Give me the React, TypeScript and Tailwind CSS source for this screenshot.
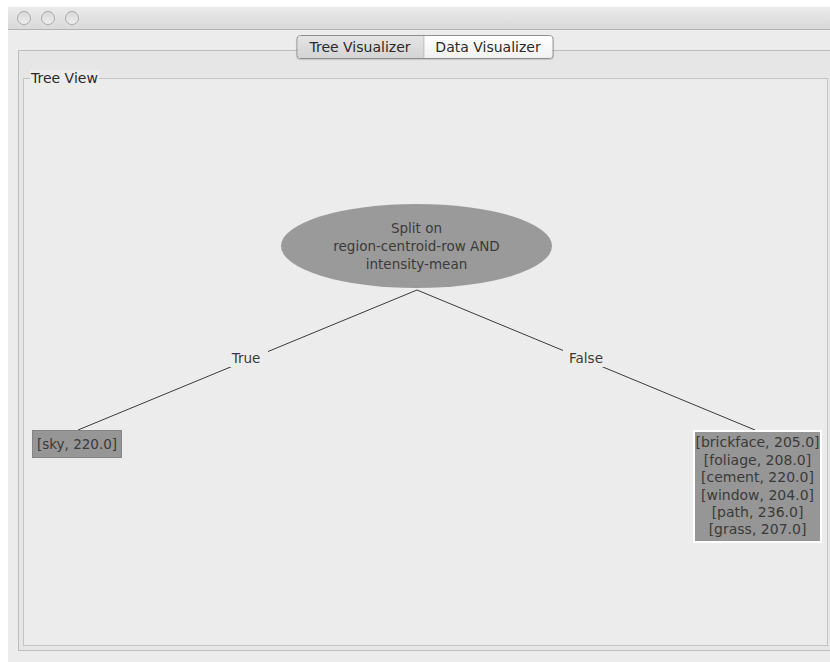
const font = { fontFamily: '"DejaVu Sans", "Liberation Sans", sans-serif' };

const leaves = [
  "[brickface, 205.0]",
  "[foliage, 208.0]",
  "[cement, 220.0]",
  "[window, 204.0]",
  "[path, 236.0]",
  "[grass, 207.0]",
];

function TrafficLight() {
  return (
    <div className="h-[14px] w-[14px] rounded-full border border-[#a9a9a9] bg-[linear-gradient(180deg,#d8d8d8,#eeeeee)]" />
  );
}

function TreeCanvas() {
  return (
    <div className="relative h-full w-full text-[13.5px] text-[#3a3a3a]">
      <svg className="absolute inset-0 h-full w-full" width="803" height="566">
        <line x1="393" y1="211" x2="54" y2="351" stroke="#3a3a3a" strokeWidth="1" />
        <line x1="393" y1="211" x2="731" y2="351" stroke="#3a3a3a" strokeWidth="1" />
      </svg>

      {/* root split node */}
      <div className="absolute left-[257px] top-[125px] flex h-[84px] w-[271px] flex-col items-center justify-center rounded-[50%] bg-[#9a9a9a] leading-[18px]">
        <div>Split on</div>
        <div>region-centroid-row AND</div>
        <div>intensity-mean</div>
      </div>

      {/* edge labels */}
      <div className="absolute left-[200px] top-[270px] w-[44px] bg-[#ececec] text-center leading-[18px]">True</div>
      <div className="absolute left-[539px] top-[270px] w-[46px] bg-[#ececec] text-center leading-[18px]">False</div>

      {/* leaves */}
      <div className="absolute left-[8px] top-[351px] flex h-[28px] w-[90px] items-center justify-center border border-[#858585] bg-[#969696]">
        [sky, 220.0]
      </div>
      <div className="absolute left-[669px] top-[351px] flex h-[113px] w-[129px] flex-col items-center justify-center border-2 border-white bg-[#969696] text-[14px] leading-[17.4px]">
        {leaves.map((l) => (
          <div key={l}>{l}</div>
        ))}
      </div>
    </div>
  );
}

export default function App() {
  return (
    <div className="h-[662px] w-[830px] overflow-hidden bg-white" style={font}>
      <div className="ml-[8px] mt-[7px] flex h-[655px] w-[822px] flex-col overflow-hidden bg-[#ececec]">
        {/* title bar */}
        <div className="flex h-[23px] shrink-0 items-center gap-[10px] border-b border-[#b4b4b4] bg-[linear-gradient(180deg,#ebebeb,#d9d9d9)] pl-[9px]">
          <TrafficLight />
          <TrafficLight />
          <TrafficLight />
        </div>

        <div className="pl-[10px] pt-[20px]">
          {/* tab pane */}
          <div className="relative h-[601px] w-[813px] border border-[#bdbdbd] bg-[#e6e6e6] pl-[4px] pt-[27px]">
            <div className="absolute left-1/2 top-[-16px] flex h-[24px] -translate-x-1/2 overflow-hidden rounded-[4px] border border-[#8e8e8e] text-[14px] text-[#2a2a2a] shadow-[0_1px_1px_rgba(0,0,0,0.15)]">
              <div className="flex w-[127px] items-center justify-center border-r border-[#b0b0b0] bg-[linear-gradient(180deg,#e4e4e4,#d4d4d4)]">
                Tree Visualizer
              </div>
              <div className="flex w-[128px] items-center justify-center bg-[linear-gradient(180deg,#ffffff,#f1f1f1)]">
                Data Visualizer
              </div>
            </div>

            {/* titled border panel */}
            <div className="relative h-[568px] w-[805px] border border-[#c4c4c4] bg-[#ececec]">
              <div className="absolute left-[6px] top-[-9px] bg-[#ececec] px-px text-[14px] leading-[16px] text-[#2a2a2a]">
                Tree View
              </div>
              <TreeCanvas />
            </div>
          </div>
        </div>
      </div>
    </div>
  );
}
